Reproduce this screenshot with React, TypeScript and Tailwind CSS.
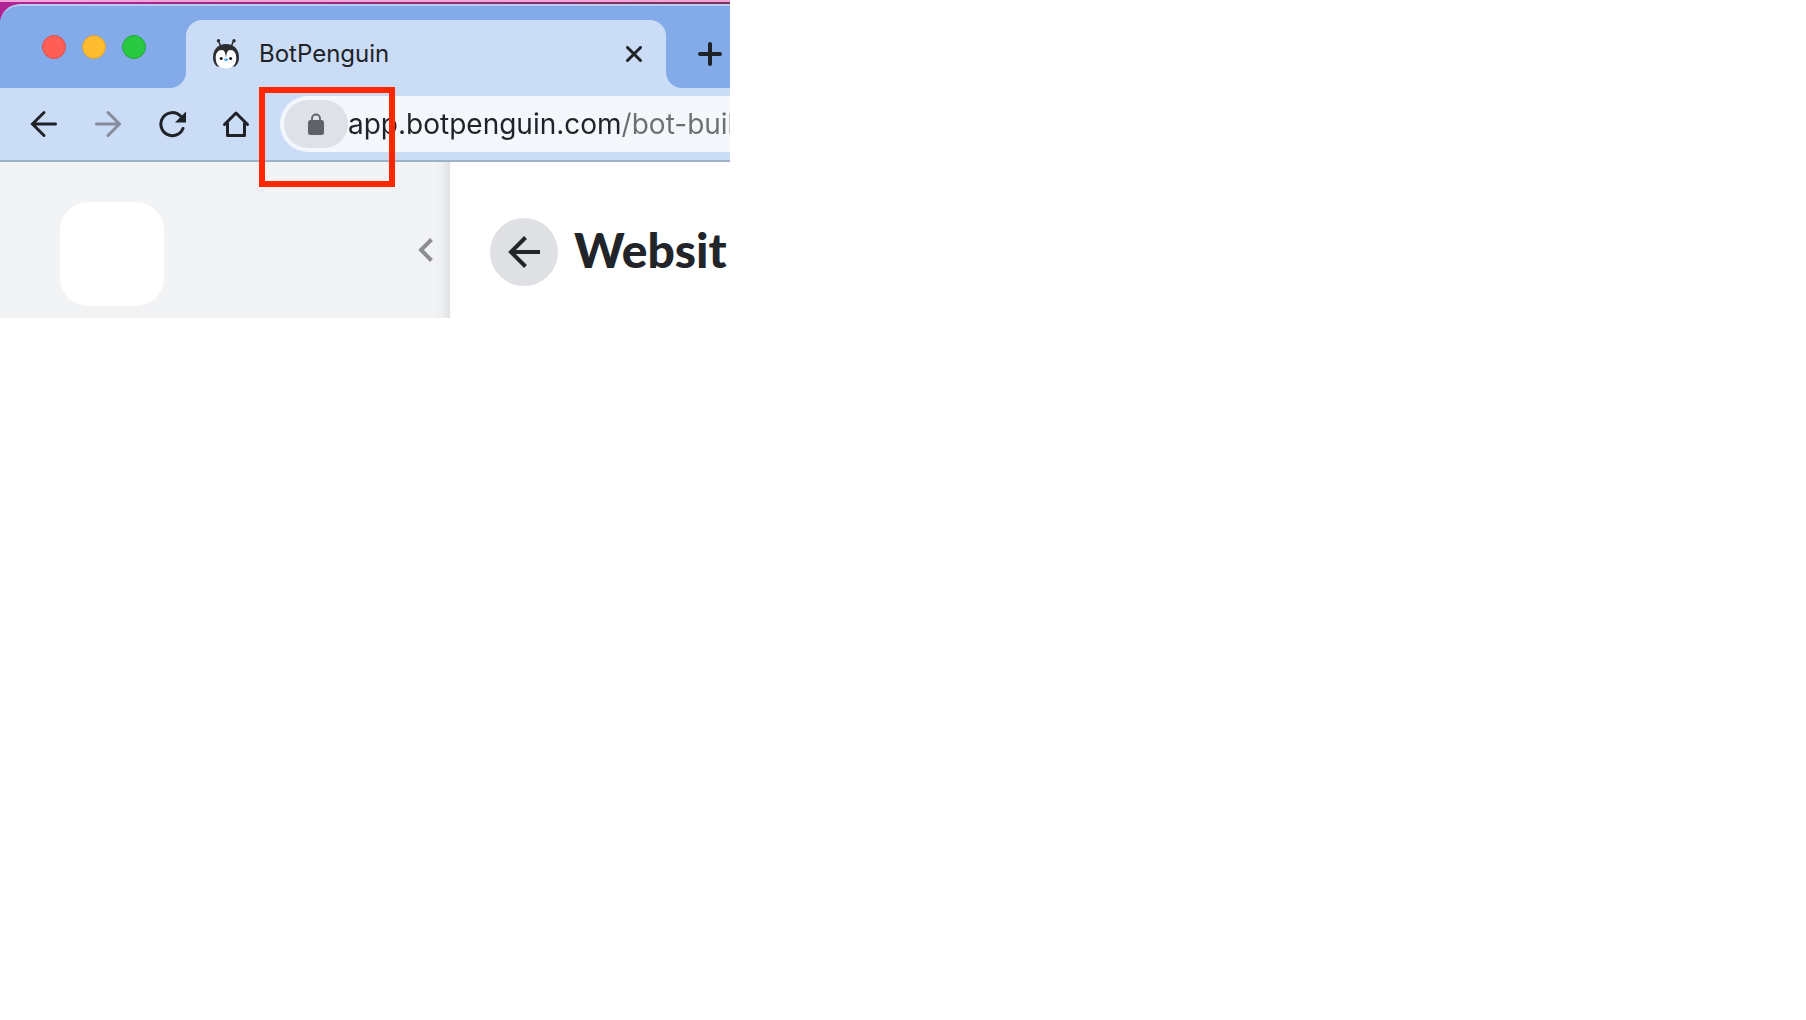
import React from "react";

const iconProps = {
  fill: "none",
  stroke: "currentColor",
  strokeWidth: 3,
  strokeLinecap: "round" as const,
  "aria-hidden": true,
};

function Penguin() {
  return (
    <svg width="26" height="30" viewBox="0 0 26 30" aria-hidden="true">
      <path d="M5.500 2 8 8M20.500 2 18 8" stroke="#2c2d31" strokeWidth="1.500" />
      <circle cx="5.500" cy="1.800" r="1.700" fill="#2c2d31" />
      <circle cx="21" cy="1.800" r="1.700" fill="#2c2d31" />
      <path d="M13 5C5 5 0 10.500 0 18.500c0 4 1.500 7 4 9h18c2.500-2 4-5 4-9C26 10.500 21 5 13 5Z" fill="#2c2d31" />
      <path d="M13 19c-.4-4.500-1.200-8-4.500-8-3.500 0-5.800 3-5.800 8C2.700 26 7 29.500 13 29.500s10.300-3.500 10.300-10.500c0-5-2.300-8-5.800-8-3.300 0-4.100 3.500-4.500 8Z" fill="#fff" />
      <circle cx="8.200" cy="19.500" r="1.500" fill="#15171b" />
      <circle cx="17.600" cy="19.500" r="1.500" fill="#15171b" />
      <path d="M10.800 20q2.200-1.200 4.400 0l-1 2h-2.400Z" fill="#49a7f5" />
    </svg>
  );
}

function Toolbar() {
  const button = "flex h-12 w-16 shrink-0 items-center justify-center text-[#1f2328]";
  return (
    <div className="flex h-[74px] items-center border-b-2 border-[#a0b1cb] bg-[#cbdcf6] pl-3">
      <button aria-label="Back" className={button}>
        <svg width="28" height="28" viewBox="0 0 28 28" {...iconProps}>
          <path d="M25.500 14H3M14 2.500 2.500 14 14 25.500" />
        </svg>
      </button>
      <button aria-label="Forward" className="flex h-12 w-16 shrink-0 items-center justify-center text-[#858c9c]">
        <svg width="28" height="28" viewBox="0 0 28 28" {...iconProps}>
          <path d="M2.500 14H25M14 2.500 25.500 14 14 25.500" />
        </svg>
      </button>
      <button aria-label="Reload" className={button}>
        <svg width="28" height="28" viewBox="0 0 28 28" {...iconProps}>
          <path d="M25 18.500A11.500 11.500 0 1 1 22.500 6" />
          <path d="M28 1.500V12.500H17Z" fill="currentColor" stroke="none" />
        </svg>
      </button>
      <button aria-label="Home" className={button}>
        <svg width="28" height="28" viewBox="0 0 28 28" {...iconProps}>
          <path d="M2.500 14.500 14 3 25.500 14.500M5.500 13V25.500H22.500V13" strokeLinejoin="round" />
        </svg>
      </button>
      <div className="ml-3 flex h-14 min-w-0 flex-1 items-center rounded-l-full bg-[#f4f8fd] pl-1">
        <div className="relative z-10">
          <button
            aria-label="View site information"
            className="flex h-12 w-16 items-center justify-center rounded-full bg-[#dee1e6] text-[#5f6368]"
          >
            <svg width="16" height="22" viewBox="0 0 16 22" aria-hidden="true">
              <path d="M4 9V5.500a4 4 0 0 1 8 0V9" fill="none" stroke="currentColor" strokeWidth="1.800" />
              <rect y="7" width="16" height="15" rx="2.500" fill="currentColor" />
            </svg>
          </button>
          <div className="pointer-events-none absolute -top-[13px] -left-[25px] h-[100px] w-[136px] border-6 border-[#ff2600]" />
        </div>
        <input
          aria-label="Address"
          defaultValue="app.botpenguin.com/bot-builder"
          className="h-12 min-w-0 flex-1 bg-[linear-gradient(to_right,#1f2226_273px,#6c6e70_273px)] bg-clip-text text-[28px] text-transparent outline-none"
        />
      </div>
    </div>
  );
}

export default function App() {
  return (
    <div className="w-full max-w-[730px] overflow-hidden bg-white font-['Inter',sans-serif]">
      <div className="border-t-2 border-[#f3a5da] bg-[linear-gradient(to_right,#b12496,#8d2c70_60%,#803257)] pt-[2px]">
        <header className="flex h-[84px] items-end rounded-tl-[20px] border-t-2 border-[#b9cdf0] bg-[#83abe9]">
          <div className="flex h-[68px] w-[186px] shrink-0 bg-[#cbdcf6]">
            <div className="flex flex-1 gap-4 rounded-br-[16px] bg-[#83abe9] pt-[15px] pl-[42px]">
              <button aria-label="Close window" className="size-6 rounded-full border border-[#dc4f4f] bg-[#ff5f57]" />
              <button aria-label="Minimize window" className="size-6 rounded-full border border-[#dba03b] bg-[#febc2e]" />
              <button aria-label="Zoom window" className="size-6 rounded-full border border-[#24a83c] bg-[#28c840]" />
            </div>
          </div>
          <div className="flex h-[68px] min-w-0 flex-1 items-center gap-5 rounded-t-[16px] bg-[#cbdcf6] pr-6 pl-[27px]">
            <Penguin />
            <span className="flex-1 text-[24px] text-[#202327]">BotPenguin</span>
            <button aria-label="Close tab" className="text-[#1f2328]">
              <svg width="16" height="16" viewBox="0 0 16 16" {...iconProps}>
                <path d="M1.500 1.500 14.500 14.500M14.500 1.500 1.500 14.500" />
              </svg>
            </button>
          </div>
          <div className="h-[68px] w-16 shrink-0 bg-[#cbdcf6]">
            <div className="h-full rounded-bl-[16px] bg-[#83abe9] pt-[22px] pl-8">
              <button aria-label="New tab" className="block text-[#1f2328]">
                <svg width="24" height="24" viewBox="0 0 24 24" {...iconProps} strokeWidth={4}>
                  <path d="M12 2V22M2 12H22" />
                </svg>
              </button>
            </div>
          </div>
        </header>
      </div>
      <Toolbar />
      <div className="flex h-[156px]">
        <aside className="flex w-[450px] shrink-0 items-start justify-between bg-[linear-gradient(to_left,#dfe0e1,#eeeff1_8px,#f2f3f5_16px)] pt-10 pr-4 pl-[60px]">
          <div className="size-[104px] rounded-[28px] bg-white" />
          <button aria-label="Collapse sidebar" className="mt-9 text-[#8d8e90]">
            <svg width="16" height="24" viewBox="0 0 16 24" fill="none" stroke="currentColor" strokeWidth="4" aria-hidden="true">
              <path d="M13.500 1.500 3 12 13.500 22.500" />
            </svg>
          </button>
        </aside>
        <main className="flex min-w-0 flex-1 items-start gap-4 pt-14 pl-10">
          <button
            aria-label="Go back"
            className="flex size-[68px] shrink-0 items-center justify-center rounded-full bg-[#dfe0e4] text-[#212529]"
          >
            <svg width="32" height="32" viewBox="0 0 32 32" fill="none" stroke="currentColor" strokeWidth="4" aria-hidden="true">
              <path d="M32 16H3M17.500 1.500 3 16 17.500 30.500" />
            </svg>
          </button>
          <h1 className="font-['Lato','Inter',sans-serif] text-[48px] leading-[64px] font-black whitespace-nowrap text-[#212529]">
            Websit
          </h1>
        </main>
      </div>
    </div>
  );
}
